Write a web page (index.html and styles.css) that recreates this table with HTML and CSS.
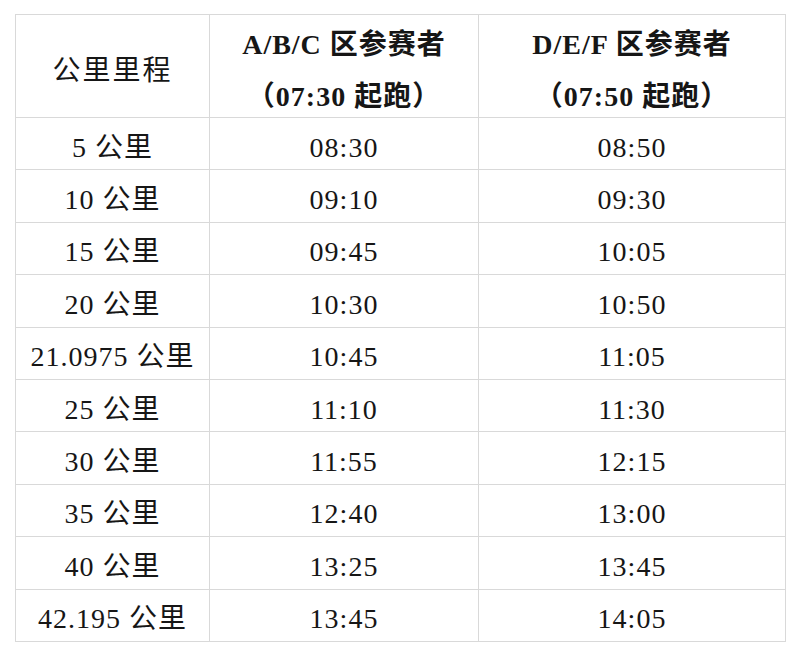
FILE: index.html
```html
<!DOCTYPE html>
<html lang="zh-CN">
<head>
<meta charset="utf-8">
<title>关门时间</title>
<link rel="stylesheet" href="styles.css">
</head>
<body>
<table class="schedule">
  <colgroup>
    <col class="c1"><col class="c2"><col class="c3">
  </colgroup>
  <thead>
    <tr class="head">
      <th class="plain">公里里程</th>
      <th><div class="line">A/B/C 区参赛者</div><div class="line">（07:30 起跑）</div></th>
      <th><div class="line">D/E/F 区参赛者</div><div class="line">（07:50 起跑）</div></th>
    </tr>
  </thead>
  <tbody>
    <tr><td>5 公里</td><td>08:30</td><td>08:50</td></tr>
    <tr><td>10 公里</td><td>09:10</td><td>09:30</td></tr>
    <tr><td>15 公里</td><td>09:45</td><td>10:05</td></tr>
    <tr><td>20 公里</td><td>10:30</td><td>10:50</td></tr>
    <tr><td>21.0975 公里</td><td>10:45</td><td>11:05</td></tr>
    <tr><td>25 公里</td><td>11:10</td><td>11:30</td></tr>
    <tr><td>30 公里</td><td>11:55</td><td>12:15</td></tr>
    <tr><td>35 公里</td><td>12:40</td><td>13:00</td></tr>
    <tr><td>40 公里</td><td>13:25</td><td>13:45</td></tr>
    <tr><td>42.195 公里</td><td>13:45</td><td>14:05</td></tr>
  </tbody>
</table>
</body>
</html>
```
FILE: styles.css
```css
html, body {
  margin: 0;
  padding: 0;
  background: #ffffff;
}
body {
  font-family: "Liberation Serif", "Noto Sans CJK SC", serif;
  color: #161616;
}
.schedule {
  border-collapse: collapse;
  margin: 14px 0 0 15px;
  width: 770px;
  table-layout: fixed;
}
.c1 { width: 194px; }
.c2 { width: 269px; }
.c3 { width: 307px; }
.schedule th,
.schedule td {
  border: 1px solid #d9d9d9;
  text-align: center;
  vertical-align: middle;
  padding: 0;
  font-size: 28px;
  letter-spacing: 1px;
}
.schedule .head { height: 102px; }
.schedule th {
  font-weight: bold;
  padding: 10px 0 0;
  box-sizing: border-box;
}
.schedule th .line {
  line-height: 40px;
  height: 40px;
}
.schedule th .line + .line {
  margin-top: 12px;
}
.schedule th.plain {
  font-weight: normal;
  letter-spacing: 2px;
  line-height: 40px;
  padding-top: 10px;
}
.schedule tbody tr { height: 52.4px; }
.schedule td {
  padding-top: 8px;
  line-height: 40px;
}
```
